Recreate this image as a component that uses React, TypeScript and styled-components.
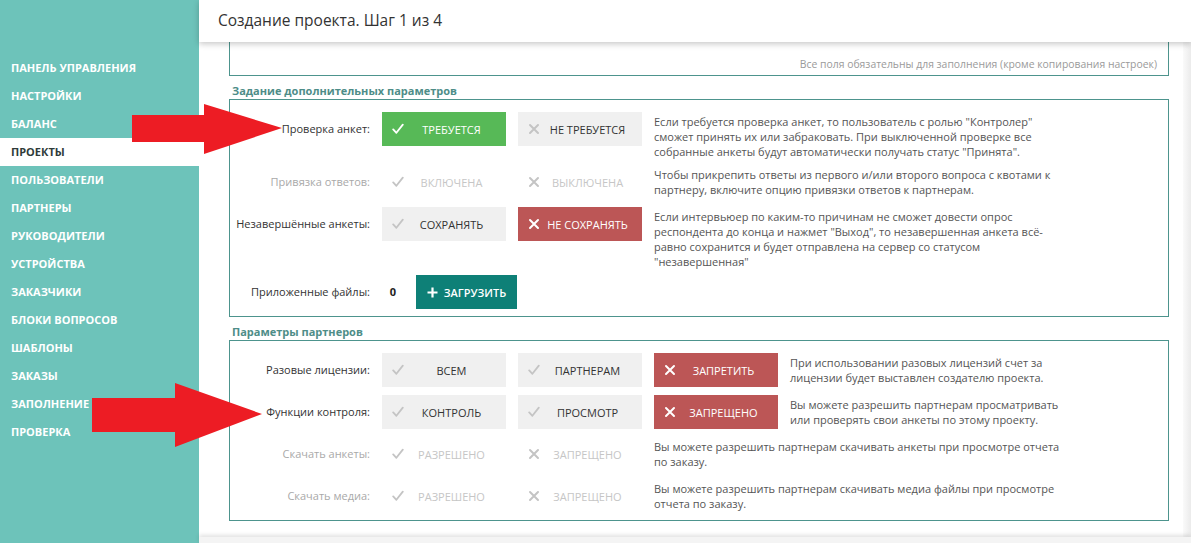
import React from "react";
import styled, { createGlobalStyle } from "styled-components";

const GlobalStyle = createGlobalStyle`
  html, body {
    margin: 0;
    padding: 0;
    background: #fff;
    font-family: "Open Sans", "Noto Sans", sans-serif;
  }
`;

const Page = styled.div`
  position: relative;
  display: flex;
  width: 1191px;
  height: 543px;
  overflow: hidden;
`;

const Sidebar = styled.nav`
  width: 199px;
  flex-shrink: 0;
  background: #6dc3ba;
  padding-top: 54px;
  box-sizing: border-box;
`;

const MenuItem = styled.div<{ $active?: boolean }>`
  height: 28px;
  line-height: 28px;
  padding-left: 11px;
  font-size: 11px;
  font-weight: 700;
  text-transform: uppercase;
  color: ${(p) => (p.$active ? "#2f3b3a" : "#fff")};
  background: ${(p) => (p.$active ? "#fff" : "transparent")};
`;

const Main = styled.div`
  flex: 1;
  display: flex;
  flex-direction: column;
  min-width: 0;
`;

const Header = styled.header`
  position: relative;
  z-index: 2;
  height: 42px;
  flex-shrink: 0;
  background: #fff;
  box-shadow: 0 2px 6px rgba(0, 0, 0, 0.22);
  padding-left: 19px;
  font-size: 15.5px;
  line-height: 40px;
  color: #333;
`;

const Body = styled.div`
  flex: 1;
  display: flex;
  min-height: 0;
`;

const Content = styled.div`
  flex: 1;
  padding: 0 14px 0 30px;
`;

const ScrollEdge = styled.div`
  width: 8px;
  background: linear-gradient(to right, #fafafa, #ebebeb);
`;

const Footer = styled.div`
  height: 6px;
  flex-shrink: 0;
  background: #f4f4f4;
  box-shadow: 0 -2px 4px rgba(0, 0, 0, 0.12);
`;

const TopBox = styled.div`
  height: 34px;
  box-sizing: border-box;
  border: 1px solid #4d948d;
  border-top: none;
  padding: 15px 11px 0 0;
  text-align: right;
  font-size: 10.4px;
  line-height: 15px;
  color: #9a9a9a;
`;

const SectionTitle = styled.div`
  margin-top: 7px;
  height: 16px;
  line-height: 16px;
  padding-left: 3px;
  font-size: 11px;
  font-weight: 700;
  color: #4e8d88;
`;

const Box = styled.div<{ $gap: number }>`
  border: 1px solid #4d948d;
  padding: 12px 0 7px 0;
  display: flex;
  flex-direction: column;
  gap: ${(p) => p.$gap}px;
`;

const Row = styled.div<{ $min: number }>`
  display: flex;
  align-items: flex-start;
  min-height: ${(p) => p.$min}px;
`;

const Label = styled.div<{ $muted?: boolean }>`
  width: 140px;
  height: 34px;
  line-height: 34px;
  margin-right: 12px;
  text-align: right;
  font-size: 11px;
  color: ${(p) => (p.$muted ? "#a9a9a9" : "#333")};
  flex-shrink: 0;
`;

type Tone = "green" | "red" | "gray" | "off";

const toneBg: Record<Tone, string> = {
  green: "#57b957",
  red: "#bc5656",
  gray: "#f0f0f0",
  off: "transparent",
};
const toneText: Record<Tone, string> = {
  green: "#fff",
  red: "#fff",
  gray: "#333",
  off: "#c6c6c6",
};
const toneIcon: Record<Tone, string> = {
  green: "#fff",
  red: "#fff",
  gray: "#c4c4c4",
  off: "#c4c4c4",
};

const Toggle = styled.div<{ $tone: Tone }>`
  width: 124px;
  height: 34px;
  margin-right: 12px;
  flex-shrink: 0;
  box-sizing: border-box;
  padding: 0 7px 0 10px;
  display: flex;
  align-items: center;
  background: ${(p) => toneBg[p.$tone]};
  color: ${(p) => toneText[p.$tone]};
  font-size: 11px;
  text-transform: uppercase;
`;

const IconBox = styled.span<{ $color: string }>`
  width: 12px;
  height: 12px;
  display: flex;
  color: ${(p) => p.$color};
`;

const ToggleText = styled.span`
  flex: 1;
  text-align: center;
  white-space: nowrap;
`;

const Desc = styled.div`
  padding-top: 2px;
  font-size: 11px;
  line-height: 15px;
  color: #555;
  white-space: nowrap;
`;

const Count = styled.div`
  width: 22px;
  height: 34px;
  line-height: 34px;
  margin-right: 12px;
  text-align: center;
  font-size: 11px;
  font-weight: 700;
  color: #222;
`;

const UploadButton = styled.div`
  width: 101px;
  height: 34px;
  background: #0e8077;
  color: #fff;
  display: flex;
  align-items: center;
  justify-content: center;
  gap: 6px;
  font-size: 11px;
  font-weight: 600;
  text-transform: uppercase;
`;

const ArrowLayer = styled.svg`
  position: absolute;
  left: 0;
  top: 0;
  pointer-events: none;
  z-index: 5;
`;

const CheckIcon = () => (
  <svg width="12" height="12" viewBox="0 0 12 12">
    <path d="M1.2 6.4 L4.4 9.8 L10.8 1.6" fill="none" stroke="currentColor" strokeWidth="1.8" strokeLinecap="round" strokeLinejoin="round" />
  </svg>
);

const CrossIcon = () => (
  <svg width="12" height="12" viewBox="0 0 12 12">
    <path d="M2 2 L10 10 M10 2 L2 10" fill="none" stroke="currentColor" strokeWidth="2" strokeLinecap="round" />
  </svg>
);

const PlusIcon = () => (
  <svg width="11" height="11" viewBox="0 0 11 11">
    <path d="M5.5 0.5 V10.5 M0.5 5.5 H10.5" stroke="#fff" strokeWidth="2.2" />
  </svg>
);

type Opt = { text: string; tone: Tone; icon: "check" | "cross" };

const ToggleButton = ({ text, tone, icon }: Opt) => (
  <Toggle $tone={tone}>
    <IconBox $color={toneIcon[tone]}>{icon === "check" ? <CheckIcon /> : <CrossIcon />}</IconBox>
    <ToggleText>{text}</ToggleText>
  </Toggle>
);

type RowData = { label: string; muted?: boolean; opts: Opt[]; desc: string[] };

const OptionRow = ({ label, muted, opts, desc, min }: RowData & { min: number }) => (
  <Row $min={min}>
    <Label $muted={muted}>{label}</Label>
    {opts.map((o, i) => (
      <ToggleButton key={i} {...o} />
    ))}
    <Desc>
      {desc.map((l, i) => (
        <div key={i}>{l}</div>
      ))}
    </Desc>
  </Row>
);

const menu = [
  "Панель управления",
  "Настройки",
  "Баланс",
  "Проекты",
  "Пользователи",
  "Партнеры",
  "Руководители",
  "Устройства",
  "Заказчики",
  "Блоки вопросов",
  "Шаблоны",
  "Заказы",
  "Заполнение",
  "Проверка",
];

const extraRows: RowData[] = [
  {
    label: "Проверка анкет:",
    opts: [
      { text: "Требуется", tone: "green", icon: "check" },
      { text: "Не требуется", tone: "gray", icon: "cross" },
    ],
    desc: [
      "Если требуется проверка анкет, то пользователь с ролью \"Контролер\"",
      "сможет принять их или забраковать. При выключенной проверке все",
      "собранные анкеты будут автоматически получать статус \"Принята\".",
    ],
  },
  {
    label: "Привязка ответов:",
    muted: true,
    opts: [
      { text: "Включена", tone: "off", icon: "check" },
      { text: "Выключена", tone: "off", icon: "cross" },
    ],
    desc: [
      "Чтобы прикрепить ответы из первого и/или второго вопроса с квотами к",
      "партнеру, включите опцию привязки ответов к партнерам.",
    ],
  },
  {
    label: "Незавершённые анкеты:",
    opts: [
      { text: "Сохранять", tone: "gray", icon: "check" },
      { text: "Не сохранять", tone: "red", icon: "cross" },
    ],
    desc: [
      "Если интервьюер по каким-то причинам не сможет довести опрос",
      "респондента до конца и нажмет \"Выход\", то незавершенная анкета всё-",
      "равно сохранится и будет отправлена на сервер со статусом",
      "\"незавершенная\"",
    ],
  },
];

const partnerRows: RowData[] = [
  {
    label: "Разовые лицензии:",
    opts: [
      { text: "Всем", tone: "gray", icon: "check" },
      { text: "Партнерам", tone: "gray", icon: "check" },
      { text: "Запретить", tone: "red", icon: "cross" },
    ],
    desc: ["При использовании разовых лицензий счет за", "лицензии будет выставлен создателю проекта."],
  },
  {
    label: "Функции контроля:",
    opts: [
      { text: "Контроль", tone: "gray", icon: "check" },
      { text: "Просмотр", tone: "gray", icon: "check" },
      { text: "Запрещено", tone: "red", icon: "cross" },
    ],
    desc: ["Вы можете разрешить партнерам просматривать", "или проверять свои анкеты по этому проекту."],
  },
  {
    label: "Скачать анкеты:",
    muted: true,
    opts: [
      { text: "Разрешено", tone: "off", icon: "check" },
      { text: "Запрещено", tone: "off", icon: "cross" },
    ],
    desc: ["Вы можете разрешить партнерам скачивать анкеты при просмотре отчета", "по заказу."],
  },
  {
    label: "Скачать медиа:",
    muted: true,
    opts: [
      { text: "Разрешено", tone: "off", icon: "check" },
      { text: "Запрещено", tone: "off", icon: "cross" },
    ],
    desc: ["Вы можете разрешить партнерам скачивать медиа файлы при просмотре", "отчета по заказу."],
  },
];

export default function App() {
  return (
    <Page>
      <GlobalStyle />
      <Sidebar>
        {menu.map((m) => (
          <MenuItem key={m} $active={m === "Проекты"}>
            {m}
          </MenuItem>
        ))}
      </Sidebar>
      <Main>
        <Header>Создание проекта. Шаг 1 из 4</Header>
        <Body>
          <Content>
            <TopBox>Все поля обязательны для заполнения (кроме копирования настроек)</TopBox>
            <SectionTitle>Задание дополнительных параметров</SectionTitle>
            <Box $gap={6}>
              {extraRows.map((r) => (
                <OptionRow key={r.label} min={36} {...r} />
              ))}
              <Row $min={34}>
                <Label>Приложенные файлы:</Label>
                <Count>0</Count>
                <UploadButton>
                  <PlusIcon />
                  Загрузить
                </UploadButton>
              </Row>
            </Box>
            <SectionTitle>Параметры партнеров</SectionTitle>
            <Box $gap={8}>
              {partnerRows.map((r) => (
                <OptionRow key={r.label} min={34} {...r} />
              ))}
            </Box>
          </Content>
          <ScrollEdge />
        </Body>
        <Footer />
      </Main>
      <ArrowLayer width="1191" height="543" viewBox="0 0 1191 543">
        <polygon points="132,115 204,115 204,104 282,128 204,154 204,142 132,142" fill="#ed1c24" />
        <polygon points="92,398 175,398 175,383 262,414 175,447 175,432 92,432" fill="#ed1c24" />
      </ArrowLayer>
    </Page>
  );
}
